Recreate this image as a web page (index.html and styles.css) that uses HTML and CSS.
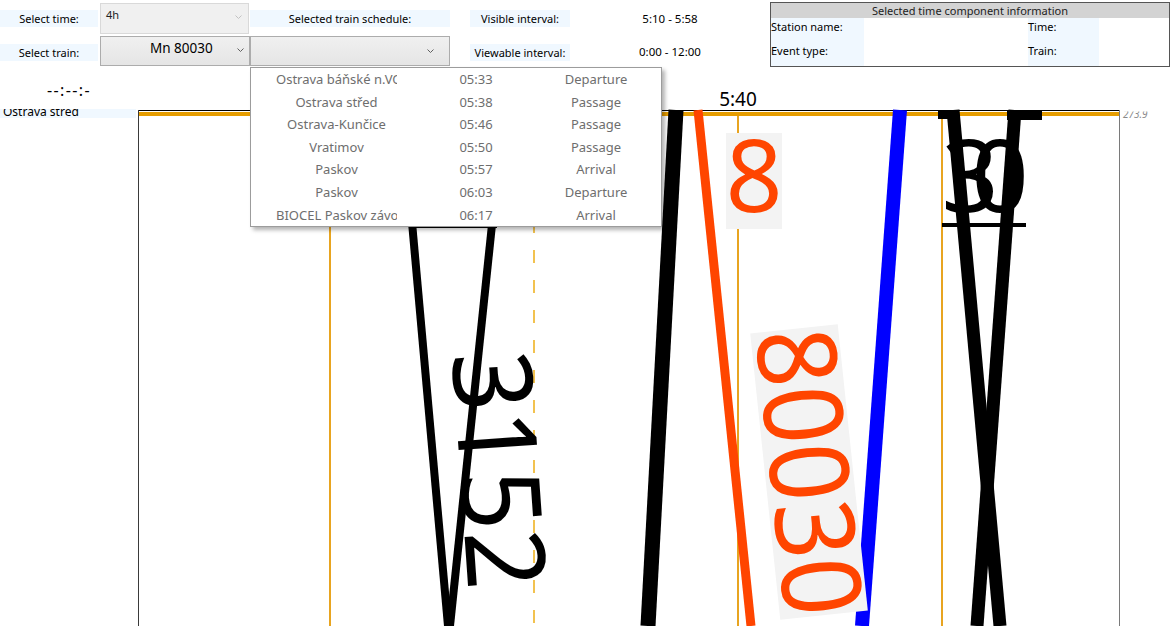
FILE: index.html
```html
<!DOCTYPE html>
<html lang="en">
<head>
<meta charset="utf-8">
<title>Train graph</title>
<link rel="stylesheet" href="styles.css">
</head>
<body>
<header class="toolbar">
  <div class="lbl c-label row1">Select time:</div>
  <div class="combo combo-time">
    <span class="combo-text">4h</span>
    <svg class="chev chev-dim" width="7" height="4" viewBox="0 0 7 4"><polyline points="0.5,0.5 3.5,3.5 6.5,0.5"/></svg>
  </div>
  <div class="lbl c-sched row1">Selected train schedule:</div>
  <div class="lbl c-int row1">Visible interval:</div>
  <div class="val row1">5:10 - 5:58</div>
  <section class="info">
    <div class="info-head">Selected time component information</div>
    <div class="info-grid">
      <div class="k">Station name:</div><div class="v"></div><div class="k">Time:</div><div class="v"></div>
      <div class="k">Event type:</div><div class="v"></div><div class="k">Train:</div><div class="v"></div>
    </div>
  </section>

  <div class="lbl c-label row2">Select train:</div>
  <div class="combo combo-train">
    <span class="combo-text">Mn 80030</span>
    <svg class="chev" width="7" height="4" viewBox="0 0 7 4"><polyline points="0.5,0.5 3.5,3.5 6.5,0.5"/></svg>
  </div>
  <div class="combo combo-sched">
    <svg class="chev" width="7" height="4" viewBox="0 0 7 4"><polyline points="0.5,0.5 3.5,3.5 6.5,0.5"/></svg>
    <div class="popup">
      <div class="n">Ostrava báňské n.VOD</div><div>05:33</div><div>Departure</div>
      <div class="n">Ostrava střed</div><div>05:38</div><div>Passage</div>
      <div class="n">Ostrava-Kunčice</div><div>05:46</div><div>Passage</div>
      <div class="n">Vratimov</div><div>05:50</div><div>Passage</div>
      <div class="n">Paskov</div><div>05:57</div><div>Arrival</div>
      <div class="n">Paskov</div><div>06:03</div><div>Departure</div>
      <div class="n">BIOCEL Paskov závod</div><div>06:17</div><div>Arrival</div>
    </div>
  </div>
  <div class="lbl c-int row2">Viewable interval:</div>
  <div class="val row2">0:00 - 12:00</div>
</header>

<main class="view">
  <aside class="axis">
    <div class="clock">--:--:-</div>
    <div class="station">Ostrava stred</div>
  </aside>
  <svg class="chart" width="1038" height="559" viewBox="138 67 1038 559">
    <defs>
      <clipPath id="kmclip"><rect x="1120" y="111.5" width="56" height="20"/></clipPath>
    </defs>
    <text class="tick" x="738" y="106" text-anchor="middle">5:40</text>
    <g class="grid">
      <line x1="330" y1="116" x2="330" y2="626"/>
      <line x1="738" y1="116" x2="738" y2="626"/>
      <line x1="942" y1="116" x2="942" y2="626"/>
    </g>
    <line class="grid-dash" x1="534" y1="130" x2="534" y2="626"/>
    <rect class="station-line" x="139" y="112" width="980" height="4"/>
    <line class="frame-top" x1="138" y1="110.5" x2="1120" y2="110.5"/>
    <line class="frame-left" x1="138.5" y1="110" x2="138.5" y2="626"/>
    <line class="frame-right" x1="1119.5" y1="110" x2="1119.5" y2="626"/>

    <g class="train-black">
      <line x1="402" y1="110" x2="448" y2="626" stroke-width="8"/>
      <line x1="504" y1="110" x2="450" y2="626" stroke-width="8"/>
      <line x1="676" y1="110" x2="648" y2="626" stroke-width="15"/>
      <line x1="953" y1="110" x2="1000" y2="626" stroke-width="13"/>
      <line x1="1015" y1="110" x2="977" y2="626" stroke-width="13"/>
      <line x1="942" y1="225" x2="1026" y2="225" stroke-width="4"/>
    </g>
    <g class="blk">
      <rect x="938" y="110" width="20" height="9"/>
      <rect x="1007" y="110" width="35" height="10"/>
      <rect x="410" y="224" width="87" height="4"/>
    </g>
    <line class="train-red" x1="698" y1="110" x2="751" y2="626"/>
    <line class="train-blue" x1="900" y1="110" x2="862" y2="626"/>

    <rect class="lbl-bg" x="726" y="133" width="56" height="96"/>
    <text class="big red" x="754" y="212" text-anchor="middle" font-size="100">8</text>

    <text class="big" x="970" y="212" text-anchor="middle" font-size="100">3</text>
    <text class="big" x="1000" y="212" text-anchor="middle" font-size="100">0</text>

    <g transform="translate(499 470) rotate(86)">
      <text class="big" x="0" y="39" text-anchor="middle" font-size="110" textLength="238" lengthAdjust="spacingAndGlyphs">3152</text>
    </g>

    <g transform="translate(809 472) rotate(84)">
      <rect class="lbl-bg" x="-144" y="-44" width="288" height="88"/>
      <text class="big red" x="0" y="39" text-anchor="middle" font-size="110" textLength="288" lengthAdjust="spacingAndGlyphs">80030</text>
    </g>

    <text class="km" x="1123" y="117.5" clip-path="url(#kmclip)">273.9</text>
  </svg>
</main>
</body>
</html>
```

FILE: styles.css
```css
* { box-sizing: border-box; }

html, body {
  margin: 0;
  padding: 0;
  background: #ffffff;
}

body {
  width: 1176px;
  height: 626px;
  overflow: hidden;
  font-family: "Noto Sans", "DejaVu Sans", sans-serif;
  color: #000;
}

/* ---------- toolbar ---------- */
.toolbar {
  display: grid;
  grid-template-columns: 100px 150px 200px 20px 100px 200px 400px;
  grid-template-rows: 31px 31px;
  row-gap: 2px;
  padding-top: 3px;
  height: 67px;
}

.row1 { grid-row: 1; }
.row2 { grid-row: 2; }

.lbl {
  align-self: center;
  height: 17px;
  background: #f0f8ff;
  font-size: 11px;
  line-height: 17px;
  text-align: center;
  white-space: nowrap;
}
.lbl.row2 { margin-top: 1px; }
.c-label { grid-column: 1; width: 98px; }
.c-sched { grid-column: 3; }
.c-int { grid-column: 5; }

.val {
  grid-column: 6;
  align-self: center;
  text-align: center;
  font-size: 11.5px;
  line-height: 16px;
}

.combo {
  position: relative;
  display: flex;
  align-items: flex-start;
  border: 1px solid #acacac;
  background: linear-gradient(#f0f0f0, #e5e5e5);
}
.combo-text { white-space: nowrap; }

.chev {
  display: block;
  margin-left: auto;
  flex: none;
}
.chev polyline {
  fill: none;
  stroke: #606060;
  stroke-width: 1;
}
.chev-dim polyline { stroke: #c2c2c2; }

.combo-time {
  grid-column: 2;
  grid-row: 1;
  width: 149px;
  height: 31px;
  border-color: #d9d9d9;
  background: #f0f0f0;
  padding: 3px 0 0 5px;
  font-size: 11px;
  color: #222;
}
.combo-time .chev { margin-top: 8px; margin-right: 6px; }

.combo-train {
  grid-column: 2;
  grid-row: 2;
  width: 150px;
  height: 30px;
  padding: 2px 0 0 49px;
  font-size: 13.5px;
}
.combo-train .chev { margin-top: 9px; margin-right: 5px; }

.combo-sched {
  grid-column: 3;
  grid-row: 2;
  width: 200px;
  height: 30px;
}
.combo-sched .chev { margin-top: 12px; margin-right: 15px; }

/* dropdown popup (overlay) */
.popup {
  position: absolute;
  left: -1px;
  top: 30px;
  width: 412px;
  height: 160px;
  z-index: 10;
  background: #fff;
  border: 1px solid #9c9c9c;
  box-shadow: 3px 3px 4px rgba(0, 0, 0, 0.3);
  display: grid;
  grid-template-columns: 121px 158px 82px;
  grid-auto-rows: 22.6px;
  padding-left: 25px;
  font-size: 13px;
  color: #6e6e6e;
  text-align: center;
}
.popup > div {
  line-height: 22.6px;
  white-space: nowrap;
  overflow: hidden;
}

/* info panel */
.info {
  grid-column: 7;
  grid-row: 1 / 3;
  margin-top: -1px;
  width: 400px;
  border: 1px solid #555;
  display: flex;
  flex-direction: column;
  background: #fff;
}
.info-head {
  height: 15px;
  background: #d3d3d3;
  font-size: 11px;
  line-height: 15px;
  text-align: center;
  color: #222;
}
.info-grid {
  flex: 1;
  display: grid;
  grid-template-columns: 93px 164px 71px 1fr;
  grid-template-rows: 1fr 1fr;
}
.info-grid .k {
  background: #f0f8ff;
  font-size: 11px;
  line-height: 16px;
  padding-top: 1px;
  white-space: nowrap;
}

/* ---------- main view ---------- */
.view {
  display: flex;
  height: 559px;
}

.axis {
  width: 138px;
  flex: none;
  display: flex;
  flex-direction: column;
}
.clock {
  padding-top: 15px;
  font-size: 16px;
  line-height: 16px;
  letter-spacing: 1.4px;
  text-align: center;
}
.station {
  margin-top: 11px;
  width: 136px;
  height: 9px;
  overflow: hidden;
  background: #f0f8ff;
  font-size: 12px;
  line-height: 6px;
  padding-left: 3px;
  white-space: nowrap;
}

.chart {
  display: block;
  flex: none;
}
.chart text { font-family: "Noto Sans", "DejaVu Sans", sans-serif; }
.tick { font-size: 19px; fill: #000; }
.km { font-size: 10px; font-style: italic; fill: #8a8a8a; }

.grid line { stroke: #e8a420; stroke-width: 2; }
.grid-dash { stroke: #f2c250; stroke-width: 2; stroke-dasharray: 13 17; }
.station-line { fill: #e69d00; }
.frame-top { stroke: #000; stroke-width: 1; }
.frame-left { stroke: #3a3a3a; stroke-width: 1; }
.frame-right { stroke: #7a7a7a; stroke-width: 1; }

.train-black line { stroke: #000; }
.blk rect { fill: #000; }
.train-red { stroke: #ff4500; stroke-width: 9; }
.train-blue { stroke: #0000ff; stroke-width: 14; }

.lbl-bg { fill: #f3f3f3; }
.big { fill: #000; }
.big.red { fill: #ff4500; }
```
